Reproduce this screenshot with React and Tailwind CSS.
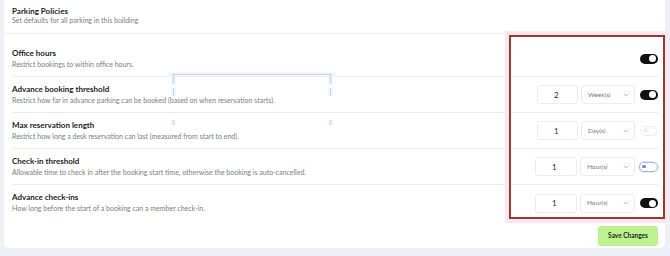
import React from 'react';

const rows = [
  { title: 'Office hours', desc: 'Restrict bookings to within office hours.', toggle: 'on' },
  { title: 'Advance booking threshold', desc: 'Restrict how far in advance parking can be booked (based on when reservation starts).', value: '2', unit: 'Week(s)', toggle: 'on', iw: 'w-[41px]', sw: 'w-[54px]' },
  { title: 'Max reservation length', desc: 'Restrict how long a desk reservation can last (measured from start to end).', value: '1', unit: 'Day(s)', toggle: 'off', iw: 'w-[41px]', sw: 'w-[54px]' },
  { title: 'Check-in threshold', desc: 'Allowable time to check in after the booking start time, otherwise the booking is auto-cancelled.', value: '1', unit: 'Hour(s)', toggle: 'focus', iw: 'w-[42px]', sw: 'w-[55px]' },
  { title: 'Advance check-ins', desc: 'How long before the start of a booking can a member check-in.', value: '1', unit: 'Hour(s)', toggle: 'on', iw: 'w-[42px]', sw: 'w-[55px]' },
];

const Toggle = ({ state }) => {
  if (state === 'on') {
    return (
      <div className="w-[18px] h-[10px] rounded-full bg-[#111111] flex items-center justify-end pr-[1.5px]">
        <div className="w-[7px] h-[7px] rounded-full bg-white" />
      </div>
    );
  }
  if (state === 'focus') {
    return (
      <div className="w-[19px] h-[10px] rounded-full bg-white border-[1.5px] border-[#aab6e2] shadow-[0_0_0_1px_#e3e8f7] flex items-center pl-[2px]">
        <div className="w-[3.5px] h-[3.5px] rounded-full bg-[#6f86d2]" />
      </div>
    );
  }
  return (
    <div className="w-[17px] h-[10px] rounded-full bg-white border border-[#ececef] flex items-center pl-[2px]">
      <div className="w-[5px] h-[5px] rounded-full bg-[#efeff2]" />
    </div>
  );
};

const Chevron = () => (
  <svg width="6" height="4" viewBox="0 0 6 4" fill="none">
    <path d="M1 1l2 2 2-2" stroke="#b5b5bb" strokeWidth="0.8" strokeLinecap="round" strokeLinejoin="round" />
  </svg>
);

// pink/cyan guide segment pair (left and right edge of a selection guide)
const GuideSides = ({ h }) => (
  <div className={`flex justify-between px-[3px] ${h}`}>
    <div className="w-[5px] bg-[#e2fbfd] flex justify-center"><div className="w-[1px] bg-[#f7b8e6]" /></div>
    <div className="w-[5px] bg-[#e2fbfd] flex justify-center"><div className="w-[1px] bg-[#f7b8e6]" /></div>
  </div>
);

const App = () => {
  return (
    <div className="relative w-[670px] h-[256px] bg-[#eef0f8] overflow-hidden" style={{ fontFamily: 'Lato, "Noto Sans", sans-serif' }}>
      <div className="ml-[4px] w-[661px] h-[248px] bg-white rounded-b-[5px] flex flex-col">
        {/* header */}
        <div className="pl-[8px] pt-[6px] pb-[9px] border-b border-[#ededf0] mr-[5px]">
          <p className="text-[8px] leading-[10px] font-bold text-[#1b1b1f]">Parking Policies</p>
          <p className="text-[7px] leading-[8px] text-[#7c7c82]">Set defaults for all parking in this building</p>
        </div>

        <div className="pt-[7px] pl-[8px] pr-[7px]">
          {rows.map((r, i) => (
            <div key={r.title} className={`h-[36px] flex items-center justify-between ${i < rows.length - 1 ? 'border-b border-[#ededf0]' : ''}`}>
              <div className="self-start pt-[7px]">
                <p className="text-[8px] leading-[10px] font-bold text-[#1b1b1f]">{r.title}</p>
                <p className="mt-[1px] text-[7px] leading-[11px] text-[#7c7c82]">{r.desc}</p>
              </div>
              <div className="flex items-center">
                {r.value && (
                  <>
                    <div className={`${r.iw} h-[19px] rounded-[3px] border border-[#ececef] flex items-center pl-[16px] text-[8px] text-[#2a2a2e]`}>
                      {r.value}
                    </div>
                    <div className={`${r.sw} h-[19px] ml-[3px] rounded-[3px] border border-[#ececef] flex items-center justify-between pl-[6px] pr-[5px] text-[6.5px] text-[#77777d]`}>
                      <span>{r.unit}</span>
                      <Chevron />
                    </div>
                  </>
                )}
                <div className="ml-[4px] w-[19px] flex justify-center">
                  <Toggle state={r.toggle} />
                </div>
              </div>
            </div>
          ))}
        </div>

        <div className="flex justify-end pr-[7px] mt-[5px]">
          <button className="w-[60px] h-[20px] rounded-[3px] bg-[#bdf291] text-[6.5px] font-bold text-[#1c2a12]">
            Save Changes
          </button>
        </div>
      </div>

      {/* annotation box */}
      <div className="absolute left-[509px] top-[35px] w-[156px] h-[184px] border-2 border-[#9a3a2a] shadow-[0_0_0_4px_#fce6f4]" />

      {/* selection guide overlay */}
      <div className="absolute left-[168px] top-[72px] w-[168px] flex flex-col">
        <div className="h-[3px] bg-[#e2fbfd] px-[4px] flex items-end">
          <div className="h-[1px] w-full bg-[#f7b8e6]" />
        </div>
        <GuideSides h="h-[9px]" />
        <div className="h-[4px]" />
        <GuideSides h="h-[8px]" />
        <div className="h-[24px]" />
        <GuideSides h="h-[5px]" />
      </div>
    </div>
  );
};

export default App;
